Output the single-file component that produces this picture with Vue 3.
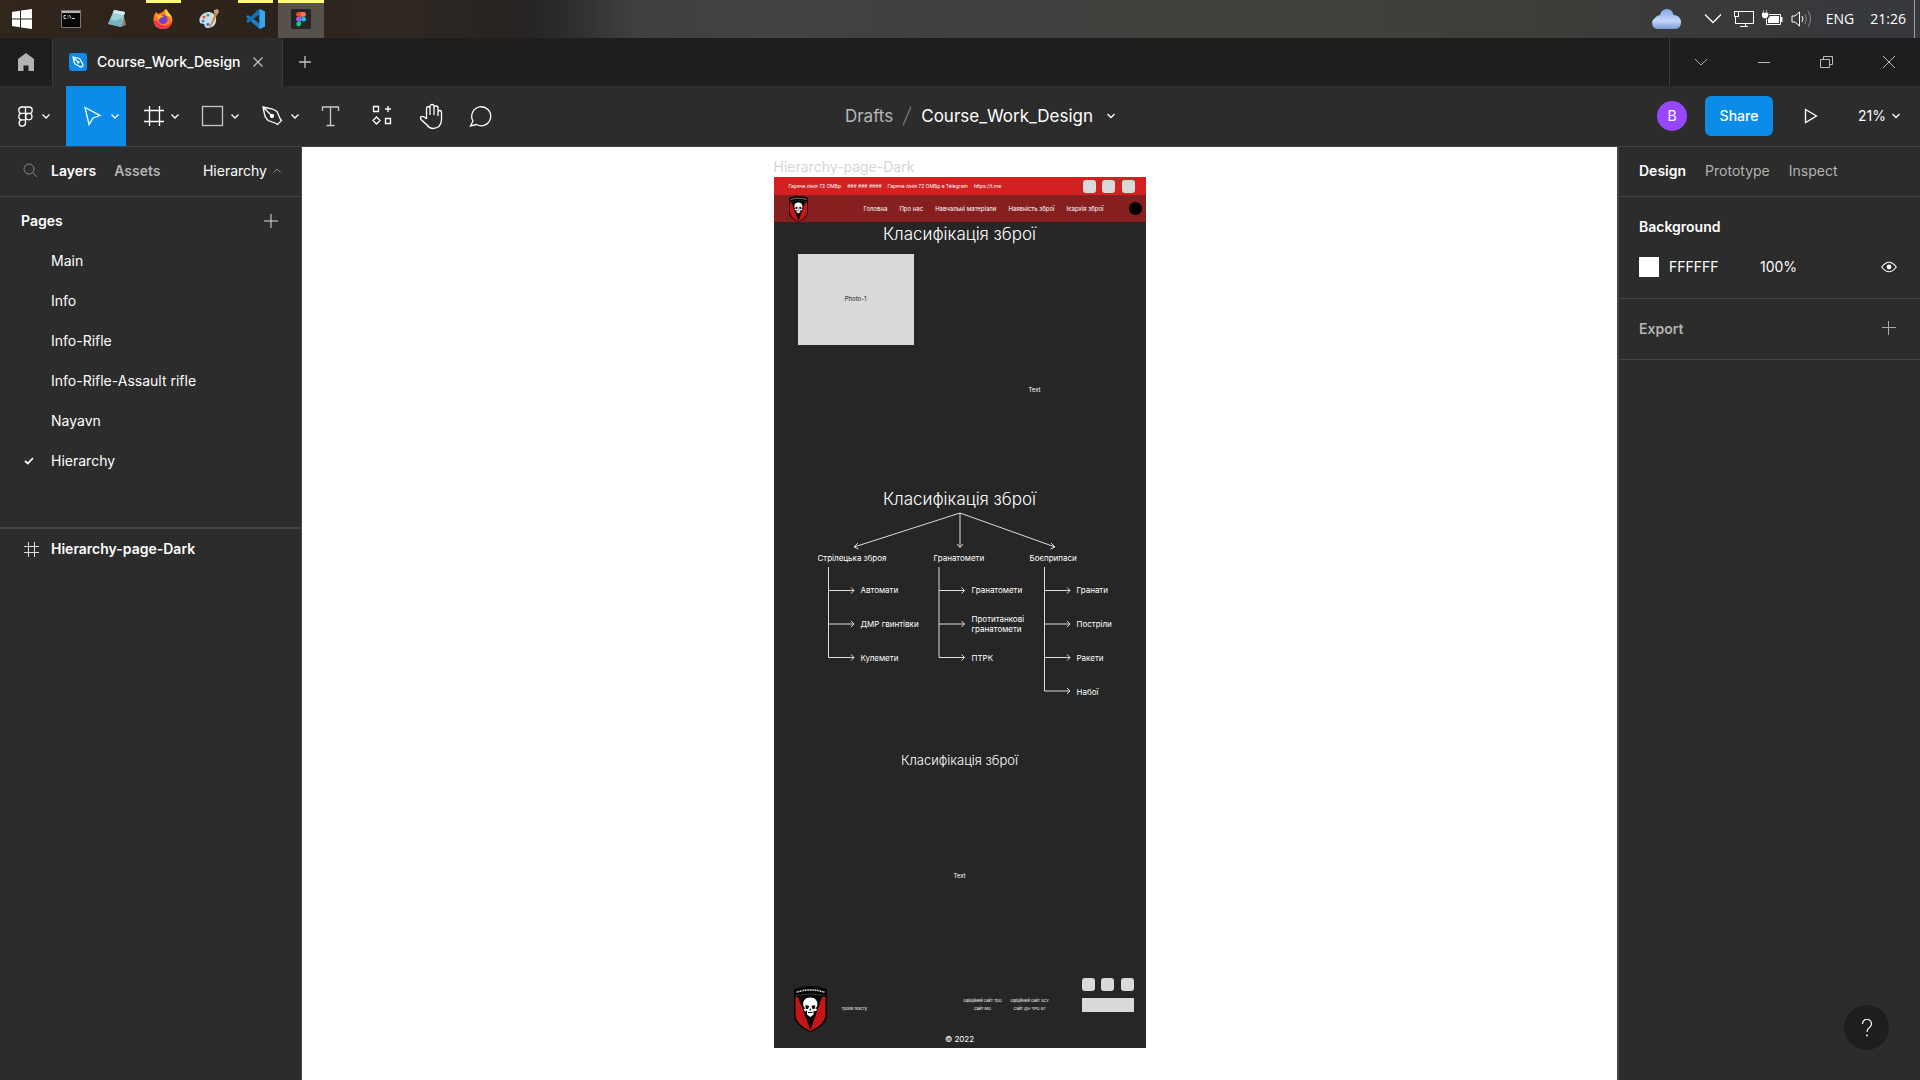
<script setup>
import { ref } from 'vue'

const pages = ['Main', 'Info', 'Info-Rifle', 'Info-Rifle-Assault rifle', 'Nayavn', 'Hierarchy']
const current = ref('Hierarchy')
const fill = ref('FFFFFF')
const opacity = ref('100%')

const menu = ['Головна', 'Про нас', 'Навчальні матеріали', 'Наявність зброї', 'Ієархія зброї']
const branches = [
  { title: 'Стрілецька зброя', items: ['Автомати', 'ДМР гвинтівки', 'Кулемети'] },
  { title: 'Гранатомети', items: ['Гранатомети', 'Протитанкові гранатомети', 'ПТРК'] },
  { title: 'Боєприпаси', items: ['Гранати', 'Постріли', 'Ракети', 'Набої'] }
]
const siteLinks = [
  ['Офіційний сайт ТрО', 'Сайт МО'],
  ['Офіційний сайт ЗСУ', 'Сайт ДН ТРО 07']
]
</script>

<template>
  <div class="desktop">
    <svg class="defs" aria-hidden="true">
      <symbol id="crest" viewBox="0 0 33 46">
        <path d="M0 3Q16.500-3 33 3V30Q32 40 16.500 46Q1 40 0 30Z" fill="#050505" />
        <path d="M1.500 11H31.500V30Q30 39 16.500 45Q3 39 1.500 30Z" fill="#c51617" />
        <path d="M1 9H32V11H28L16.500 44L4 11H1Z" fill="#050505" />
        <path d="M1.500 9.500Q16.500 6.500 31.500 9.500" fill="none" stroke="#555" stroke-width=".6" />
        <path d="M2.500 6.200Q16.500 1.600 30.500 6.200" fill="none" stroke="#ddd" stroke-width="1.500" stroke-dasharray="1.200 .5" />
        <path d="M16.300 11.500C11 11.500 9 15 9.200 18.500C9.300 20.500 10 21.500 11.500 22L9.500 23.500L11 25.500L13 24.500V28.500L16.300 31L19.600 28.500V24.500L21.600 25.500L23.200 23.500L21.200 22C22.800 21.500 23.400 20 23.400 18.500C23.500 15 21.500 11.500 16.300 11.500Z" fill="#fff" />
        <path d="M11.200 19.500Q13.500 18.500 15.200 20.500L14 23H12ZM21.400 19.500Q19 18.500 17.400 20.500L18.600 23H20.600ZM16.300 22L17.300 24.500H15.300ZM14 26H18.600V27H14Z" fill="#111" />
      </symbol>
    </svg>

    <header class="taskbar">
      <nav class="tasks" aria-label="Taskbar">
        <button class="task start" aria-label="Start">
          <svg width="22" height="22" viewBox="0 0 22 22"><path d="M1 4L9 2.800V10.400H1ZM10 2.600L21 1V10.400H10ZM1 11.400H9V19.200L1 18ZM10 11.400H21V21L10 19.400Z" fill="#fff" /></svg>
        </button>
        <button class="task" aria-label="Command Prompt">
          <svg width="20" height="18" viewBox="0 0 20 18"><rect x=".5" y=".5" width="19" height="17" fill="#080808" stroke="#777" /><rect x="1" y="1" width="18" height="2" fill="#b8b8b8" /><path d="M5 5.500H3V8.500H5M7 5.500V6.500M7 7.500V8.500M8.500 5L10 8.500M11 8.500H14" stroke="#ccc" fill="none" /></svg>
        </button>
        <button class="task" aria-label="Notepad">
          <svg width="20" height="20" viewBox="0 0 20 20"><path d="M16 3L19 16L14 18Z" fill="#8b8466" /><path d="M7 1L18 3L14 18L1 15Z" fill="#9fd0da" /><path d="M7 1L18 3L17 6L6 4Z" fill="#d8f0f2" /><path d="M3 10L9 12L15 9L14 18L1 15Z" fill="#5fa5b6" opacity=".7" /></svg>
        </button>
        <button class="task open" aria-label="Firefox">
          <svg width="20" height="20" viewBox="0 0 20 20"><path d="M3 3L5.500 5C8 3 10 4 11 1L14 0C14 3 19 5 19.500 11C19 17 15 20 10 20C4 20 0 16 .5 10C.5 7 1.500 5 3 3Z" fill="#ff7a1c" /><path d="M13 0C14 4 19 5 19 11C18 8 16 7 14 7C12 5 12 2 13 0Z" fill="#ffdc3d" /><path d="M1 11C1 17 6 20 10 20C15 20 18 17 19 13C15 18 7 18 4 12Z" fill="#f52f55" /><circle cx="10" cy="10.500" r="4.500" fill="#7a3bd0" /><path d="M3 6L8 6L11 8C8 8 7 9 6 11Z" fill="#ffb42b" /></svg>
        </button>
        <button class="task" aria-label="Paint">
          <svg width="20" height="20" viewBox="0 0 20 20"><path d="M9 3C3 4 0 8 .5 12C1 16 4 14 5 15C6 16 5 19 9 19C14 19 18 15 17 9C16 5 13 3 9 3Z" fill="#c9e2f2" /><circle cx="5" cy="8" r="1.600" fill="#e25a41" /><circle cx="9" cy="6" r="1.600" fill="#4b9f4a" /><circle cx="4" cy="12" r="1.500" fill="#4b83d8" /><circle cx="9" cy="15.500" r="1.700" fill="#3a7fd6" /><path d="M16 4L18 6L12 18L10 19Z" fill="#d9862f" /><path d="M15 1L19 0L20 3L18 6L15 4Z" fill="#c2a06b" /></svg>
        </button>
        <button class="task open" aria-label="Visual Studio Code">
          <svg width="20" height="20" viewBox="0 0 20 20"><path d="M14.500 0L20 2.500V17.500L14.500 20L1 8L2.800 6L14.500 14.500Z" fill="#1f7fc4" /><path d="M14.500 0V5.500L2.800 14L1 12L13 .8Z" fill="#1173b6" /><path d="M14.500 0L20 2.500V17.500L14.500 20Z" fill="#37a6ee" /></svg>
        </button>
        <button class="task open active" aria-label="Figma">
          <svg width="20" height="20" viewBox="0 0 20 20"><rect width="20" height="20" rx="1" fill="#252525" /><path d="M10 3H7.500A2.400 2.400 0 0 0 7.500 7.800H10Z" fill="#f24e1e" /><path d="M10 3H12.500A2.400 2.400 0 0 1 12.500 7.800H10Z" fill="#ff7262" /><path d="M10 7.800H7.500A2.400 2.400 0 0 0 7.500 12.600H10Z" fill="#a259ff" /><circle cx="12.500" cy="10.200" r="2.400" fill="#1abcfe" /><path d="M10 12.600H7.500A2.400 2.400 0 1 0 10 15Z" fill="#0acf83" /></svg>
        </button>
      </nav>
      <div class="tray">
        <svg width="30" height="20" viewBox="0 0 30 20"><defs><linearGradient id="sky" x2="0" y2="1"><stop stop-color="#7fa7ee" /><stop offset=".6" stop-color="#c4d8f8" /><stop offset="1" stop-color="#7898d6" /></linearGradient></defs><path d="M6 20A6 6 0 0 1 4 9C6 6 8 7 9 6C10 2 13 0 16 0C20 0 22 3 22.500 6C27 6 30 9 30 13C30 17 28 20 24 20Z" fill="url(#sky)" /></svg>
        <svg class="tray-chevron" width="18" height="12" viewBox="0 0 18 12"><path d="M1 1.500L9 9.500L17 1.500" fill="none" stroke="#fff" stroke-width="1.300" /></svg>
        <svg width="21" height="18" viewBox="0 0 21 18" fill="none" stroke="#fff" shape-rendering="crispEdges"><path d="M5 1.500H20.500V13.500H2.500V7M12 13V16M7 16.500H15M1 1.500H5V6H1Z" /></svg>
        <svg width="21" height="18" viewBox="0 0 21 18"><path d="M7 4.500H18.500V14.500H4.500V9" fill="none" stroke="#fff" /><path d="M8 6H17V13H6V9ZM19 7H20.500V12H19Z" fill="#fff" /><path d="M0 3H6V6L4.500 8H1.500L0 6ZM1.500 0V3M4.500 0V3" fill="#fff" stroke="#fff" stroke-width=".5" /></svg>
        <svg width="21" height="18" viewBox="0 0 21 18" fill="none" stroke="#fff"><path d="M1 6H4L8.500 2V16L4 12H1Z" /><path d="M11 6Q13 9 11 12" /><path d="M14 4Q17 9 14 14M17 1Q22 9 17 17" opacity=".4" /></svg>
        <span class="lang">ENG</span>
        <time>21:26</time>
      </div>
    </header>

    <div class="tabbar">
      <button class="home" aria-label="Home"><svg width="16" height="18" viewBox="0 0 16 18"><path d="M8 0L16 6V18H10.500V12.500H5.500V18H0V6Z" fill="#b3b3b3" /></svg></button>
      <div class="file-tab">
        <svg width="18" height="18" viewBox="0 0 18 18"><rect width="18" height="18" rx="3" fill="#0c8ce9" /><path d="M4 4L10.500 5.500L13.500 10.500L14 12.500L12.500 14L10.500 13.500L5.500 10.500ZM4 4L9 9" fill="none" stroke="#fff" stroke-width="1.200" /><circle cx="9.300" cy="9.300" r="1.200" fill="#fff" /></svg>
        <span>Course_Work_Design</span>
        <button aria-label="Close tab"><svg width="10" height="10" viewBox="0 0 10 10"><path d="M.5 .5L9.500 9.500M9.500 .5L.5 9.500" stroke="#bbb" stroke-width="1.300" /></svg></button>
      </div>
      <button class="new-tab" aria-label="New tab"><svg width="12" height="12" viewBox="0 0 12 12"><path d="M6 0V12M0 6H12" stroke="#c4c4c4" stroke-width="1.300" /></svg></button>
      <div class="window-controls">
        <button aria-label="More tabs"><svg width="14" height="14" viewBox="0 0 14 14"><path d="M1 4L7 10L13 4" fill="none" stroke="#aaa" /></svg></button>
        <button aria-label="Minimize"><svg width="14" height="14" viewBox="0 0 14 14"><path d="M1 7.500H13" stroke="#bbb" /></svg></button>
        <button aria-label="Restore"><svg width="14" height="14" viewBox="0 0 14 14"><path d="M1.500 4.500H10.500V12.500H1.500ZM4.500 4V1.500H13.500V9.500H11" fill="none" stroke="#bbb" /></svg></button>
        <button aria-label="Close"><svg width="14" height="14" viewBox="0 0 14 14"><path d="M1 1L13 13M13 1L1 13" stroke="#bbb" /></svg></button>
      </div>
    </div>

    <div class="toolbar">
      <div class="tools">
        <button aria-label="Main menu"><svg width="66" height="60" viewBox="0 0 66 60"><path d="M25.500 21H22A3.200 3.200 0 0 0 22 27.400H25.500ZM25.500 21H29A3.200 3.200 0 0 1 29 27.400H25.500ZM25.500 27.400H22A3.200 3.200 0 0 0 22 33.800H25.500ZM22 33.800A3.200 3.200 0 1 0 25.500 37V33.800Z" /><circle cx="28.800" cy="30.600" r="3.200" /><path d="M42.500 28.500L46 32L49.500 28.500" /></svg></button>
        <button class="on" aria-label="Move"><svg width="60" height="60" viewBox="0 0 60 60"><path d="M19 21.500L34 29.500L27 32L23 38.500Z" /><path d="M45.500 28.500L49 32L52.500 28.500" /></svg></button>
        <button aria-label="Frame"><svg width="60" height="60" viewBox="0 0 60 60"><path d="M23.500 20V40M33.500 20V40M18 24.500H38M18 35.500H38" /><path d="M45.500 28.500L49 32L52.500 28.500" /></svg></button>
        <button aria-label="Rectangle"><svg width="60" height="60" viewBox="0 0 60 60"><rect x="16.500" y="20.500" width="20" height="19" stroke="#c8c8c8" /><path d="M45.500 28.500L49 32L52.500 28.500" /></svg></button>
        <button aria-label="Pen"><svg width="60" height="60" viewBox="0 0 60 60"><path d="M17 21L26.500 23L31 25.500L34 32.500L35.500 34.500L31.500 38.500L29 37L22 34.500L19 30.500ZM17 21L25 29" /><circle cx="26" cy="30" r="1.500" fill="#fff" /><path d="M45.500 28.500L49 32L52.500 28.500" /></svg></button>
        <button aria-label="Text"><svg width="50" height="60" viewBox="0 0 50 60"><path d="M16.500 25V21H32.500V25M24.500 21V39.500M20.500 39.500H28.500" stroke="#c8c8c8" /></svg></button>
        <button aria-label="Resources"><svg width="50" height="60" viewBox="0 0 50 60"><path d="M17.500 20.500H22.500V25.500H17.500ZM29.500 32.500H34.500V37.500H29.500ZM32 20V26M29 23H35M20.500 31L24 34.500L20.500 38L17 34.500Z" /></svg></button>
        <button aria-label="Hand"><svg width="50" height="60" viewBox="0 0 50 60"><path d="M20.500 33V22.500A1.700 1.700 0 0 1 24 22.500V29M24 22.500V20.500A1.700 1.700 0 0 1 28 20.500V29M28 21.500A1.700 1.700 0 0 1 32 22.500V30M32 26A1.700 1.700 0 0 1 35.500 26.500V34Q35 42 27 42.500Q23.500 42.500 21 39L15 33.500Q13.500 31 16 30.500Q18 30 20.500 33" /></svg></button>
        <button aria-label="Comment"><svg width="50" height="60" viewBox="0 0 50 60"><path d="M14.500 40L17 35A9.500 9.500 0 1 1 20.500 38.500Z" /></svg></button>
      </div>
      <div class="crumbs">
        <a href="#drafts">Drafts</a>
        <svg class="slash" width="10" height="20" viewBox="0 0 10 20"><path d="M1 19.500L9 .5" /></svg>
        <button>Course_Work_Design<svg width="8" height="6" viewBox="0 0 8 6"><path d="M.5 1L4 4.500L7.500 1" /></svg></button>
      </div>
      <div class="account">
        <span class="avatar">B</span>
        <button class="share">Share</button>
        <button class="play" aria-label="Present"><svg width="14" height="16" viewBox="0 0 14 16"><path d="M1.500 1.500L12.500 8L1.500 14.500Z" /></svg></button>
        <button class="zoom">21%<svg width="8" height="6" viewBox="0 0 8 6"><path d="M.5 1L4 4.500L7.500 1" /></svg></button>
      </div>
    </div>

    <div class="workspace">
      <aside class="panel left">
        <div class="panel-tabs">
          <svg width="15" height="15" viewBox="0 0 15 15" fill="none" stroke="#888"><circle cx="6" cy="6" r="5" /><path d="M9.800 9.800L14 14" /></svg>
          <button class="strong">Layers</button>
          <button class="strong dim">Assets</button>
          <button class="page-pick">Hierarchy<svg width="8" height="6" viewBox="0 0 8 6"><path d="M.5 4.500L4 1L7.500 4.500" fill="none" stroke="#888" /></svg></button>
        </div>
        <div class="pages-head">
          <h2>Pages</h2>
          <button aria-label="Add page"><svg width="14" height="14" viewBox="0 0 14 14"><path d="M7 0V14M0 7H14" stroke="#ddd" /></svg></button>
        </div>
        <ul class="pages">
          <li v-for="p in pages" :key="p">
            <button @click="current = p">
              <span class="mark"><svg v-if="p === current" width="10" height="8" viewBox="0 0 10 8"><path d="M1 4L3.800 6.500L9 1" fill="none" stroke="#fff" stroke-width="1.800" /></svg></span>{{ p }}
            </button>
          </li>
        </ul>
        <button class="layer">
          <span class="mark"><svg width="15" height="15" viewBox="0 0 15 15"><path d="M4.500 0V15M10.500 0V15M0 4.500H15M0 10.500H15" stroke="#ddd" /></svg></span>Hierarchy-page-Dark
        </button>
      </aside>

      <main class="canvas">
        <div class="frame-name">Hierarchy-page-Dark</div>
        <article class="artboard">
          <div class="hotline">
            <span>Гаряча лінія 72 ОМБр</span><span>### ### ####</span><span>Гаряча лінія 72 ОМБр в Telegram</span><span>https://t.me</span>
            <div class="squares"><i></i><i></i><i></i></div>
          </div>
          <nav class="site-nav">
            <svg width="19" height="26"><use href="#crest" /></svg>
            <a v-for="m in menu" :key="m" href="#menu">{{ m }}</a>
            <i class="dot"></i>
          </nav>
          <h1>Класифікація зброї</h1>
          <section class="intro">
            <div class="photo">Photo-1</div>
            <p>Text</p>
          </section>
          <h1>Класифікація зброї</h1>
          <section class="tree">
            <svg class="links" width="371" height="190" viewBox="0 0 371 190">
              <path d="M186 4L80 38M84 34L80 38L84.500 40M186 4V38M183 35L186 38.500L189 35M186 4L281 38M277 34L281 38L276.500 40" />
              <path d="M54.500 58V148.500H80M54.500 81.500H80M54.500 115H80M77 78.500L80 81.500L77 84.500M77 112L80 115L77 118M77 145.500L80 148.500L77 151.500" />
              <path d="M165 58V148.500H190.500M165 81.500H190.500M165 115H190.500M187.500 78.500L190.500 81.500L187.500 84.500M187.500 112L190.500 115L187.500 118M187.500 145.500L190.500 148.500L187.500 151.500" />
              <path d="M270.500 58V182H296M270.500 81.500H296M270.500 115H296M270.500 148.500H296M293 78.500L296 81.500L293 84.500M293 112L296 115L293 118M293 145.500L296 148.500L293 151.500M293 179L296 182L293 185" />
            </svg>
            <div v-for="b in branches" :key="b.title" class="branch">
              <h3>{{ b.title }}</h3>
              <ul><li v-for="i in b.items" :key="i">{{ i }}</li></ul>
            </div>
          </section>
          <h2>Класифікація зброї</h2>
          <p class="note">Text</p>
          <footer class="site-footer">
            <svg width="33" height="46"><use href="#crest" /></svg>
            <span class="blurb">Трохи тексту</span>
            <div v-for="(col, n) in siteLinks" :key="n" class="site-links">
              <a v-for="l in col" :key="l" href="#site">{{ l }}</a>
            </div>
            <div class="contact">
              <div class="squares"><i></i><i></i><i></i></div>
              <div class="bar"></div>
            </div>
          </footer>
          <p class="copyright">© 2022</p>
        </article>
      </main>

      <aside class="panel right">
        <div class="panel-tabs">
          <button class="strong">Design</button>
          <button class="dim">Prototype</button>
          <button class="dim">Inspect</button>
        </div>
        <section class="background">
          <h2>Background</h2>
          <div class="fill-row">
            <span class="swatch"></span>
            <input v-model="fill" class="hex" aria-label="Background colour">
            <input v-model="opacity" class="opacity" aria-label="Background opacity">
            <button aria-label="Toggle visibility"><svg width="16" height="12" viewBox="0 0 16 12"><path d="M.7 6Q8-3.500 15.300 6Q8 15.500 .7 6Z" fill="none" stroke="#fff" stroke-width="1.200" /><circle cx="8" cy="6" r="2.400" fill="#fff" /></svg></button>
          </div>
        </section>
        <section class="export">
          <h2>Export</h2>
          <button aria-label="Add export"><svg width="16" height="14" viewBox="0 0 16 14"><path d="M7.500 0V14M1 6.500H15" stroke="#aaa" /></svg></button>
        </section>
        <button class="help" aria-label="Help"><svg width="12" height="18" viewBox="0 0 12 18"><path d="M1.500 5A4.500 4.500 0 1 1 8.500 8.500Q6 10 6 13" fill="none" stroke="#fff" stroke-width="1.200" /><circle cx="6" cy="16.500" r=".9" fill="#fff" /></svg></button>
      </aside>
    </div>
  </div>
</template>

<style>
body { background: #2c2c2c; }
</style>

<style scoped>
* { box-sizing: border-box; }
.desktop {
  display: flex;
  flex-direction: column;
  min-height: 100vh;
  font-family: Inter, "Liberation Sans", sans-serif;
  font-size: 14px;
  line-height: 20px;
  color: #fff;
  background: #2c2c2c;
}
.defs { position: absolute; width: 0; height: 0; }
svg { display: block; flex: none; }
button, input {
  margin: 0;
  padding: 0;
  border: 0;
  background: none;
  color: inherit;
  font: inherit;
}
button { display: flex; align-items: center; }
h1, h2, h3, p, ul { margin: 0; padding: 0; list-style: none; }
a { color: inherit; text-decoration: none; }

.taskbar {
  display: flex;
  justify-content: space-between;
  height: 38px;
  background: linear-gradient(90deg, #31261c 0%, #2b221b 15%, #302822 20%, #262322 27%, #2a2a29 29%, #40413f 33%, #434442 40%, #40413f 50%, #403f3b 75%, #3a3a39 88%, #36383d 100%);
}
.tasks { display: flex; }
.task { position: relative; justify-content: center; width: 46px; }
.start { width: 48px; padding-right: 4px; }
.open::before {
  content: "";
  position: absolute;
  top: 0;
  left: 6px;
  width: 35px;
  height: 3px;
  background: #fffa6e;
}
.active { background: #57514b; }
.active::before { left: 0; width: 100%; }
.tray {
  display: flex;
  align-items: center;
  border-right: 1px solid #a0a0a0;
  margin-right: 5px;
  padding-right: 8px;
  font-family: "Open Sans", sans-serif;
}
.tray svg { margin-right: 8px; }
.tray .tray-chevron { margin: 0 11px 0 15px; }
.lang { margin: 0 16px 0 6px; }

.tabbar { display: flex; height: 48px; background: #1e1e1e; padding-left: 1px; }
.home { width: 51px; padding-right: 2px; justify-content: center; }
.file-tab {
  display: flex;
  align-items: center;
  width: 231px;
  padding: 0 19px 0 16px;
  border: solid #3c3c3c;
  border-width: 0 1px;
  background: #2c2c2c;
  font-weight: 500;
}
.file-tab span { margin: 0 auto 0 10px; }
.new-tab { width: 43px; justify-content: center; }
.window-controls { display: flex; width: 251px; margin-left: auto; border-left: 1px solid #3c3c3c; }
.window-controls button { flex: 1; justify-content: center; }

.toolbar {
  display: grid;
  grid-template-columns: 1fr auto 1fr;
  height: 61px;
  border-bottom: 1px solid #444;
}
.tools { display: flex; }
.tools .on { background: #0c8ce9; }
.toolbar svg { fill: none; stroke: #fff; stroke-width: 1.3; }
.crumbs { display: flex; align-items: center; padding-left: 40px; font-size: 17px; }
.crumbs a { color: #b8b8b8; }
.crumbs .slash { margin: 0 9px; stroke: #777; }
.crumbs button svg { margin-left: 14px; }
.account { display: flex; align-items: center; justify-content: flex-end; padding-right: 20px; }
.avatar { width: 30px; height: 30px; border-radius: 50%; background: #9747ff; text-align: center; line-height: 30px; }
.share {
  justify-content: center;
  width: 68px;
  height: 40px;
  margin: 0 31px 0 18px;
  border-radius: 6px;
  background: #0c8ce9;
  font-weight: 500;
}
.play { margin-right: 40px; }
.zoom svg { margin-left: 6px; }

.workspace { display: flex; flex: 1; }
.panel { flex: none; background: #2c2c2c; }
.panel h2 { font-size: 14px; font-weight: 600; }
.left { width: 302px; border-right: 1px solid #444; }
.right { position: relative; width: 303px; border-left: 2px solid #444; }
.panel-tabs { display: flex; align-items: center; height: 50px; border-bottom: 1px solid #444; }
.strong { font-weight: 600; }
.dim { color: #b3b3b3; }
.left .panel-tabs { padding: 0 20px 2px 23px; }
.left .panel-tabs .strong { margin-left: 13px; }
.left .panel-tabs .dim { margin-left: 18px; }
.page-pick { margin-left: auto; }
.page-pick svg { margin-left: 6px; }
.pages-head { display: flex; align-items: center; justify-content: space-between; height: 44px; padding: 4px 23px 0 21px; }
.pages { height: 288px; border-bottom: 2px solid #444; }
.pages button, .layer { width: 100%; height: 40px; padding-left: 24px; text-align: left; }
.mark { width: 27px; }
.layer { font-weight: 600; }

.right .panel-tabs { gap: 19px; padding: 0 0 2px 20px; }
.right section { border-bottom: 1px solid #444; padding: 20px 23px 0 20px; }
.background { height: 102px; }
.fill-row { display: flex; align-items: center; margin-top: 20px; }
.swatch { width: 20px; height: 20px; background: #fff; }
.hex { width: 101px; padding-left: 10px; }
.opacity { width: 60px; }
.fill-row button { margin-left: auto; }
.export { display: flex; justify-content: space-between; align-items: flex-start; height: 61px; color: #b3b3b3; }
.export button { margin-top: 2px; }
.help {
  position: absolute;
  right: 31px;
  bottom: 30px;
  justify-content: center;
  width: 45px;
  height: 45px;
  border-radius: 50%;
  background: #1e1e1e;
}

.canvas { display: flex; flex: 1; flex-direction: column; align-items: center; padding-top: 10px; background: #fff; }
.frame-name { width: 372px; color: #d6d6d6; }
.artboard { width: 372px; background: #262626; font-size: 6px; line-height: 12px; }
.artboard h1, .artboard h2 { font-weight: 300; text-align: center; }
.artboard h1 { height: 22px; font-size: 17px; line-height: 24px; }
.artboard h2 { font-size: 13px; line-height: 20px; }
.squares { display: flex; justify-content: space-between; width: 52px; }
.squares i { width: 13px; height: 13px; border-radius: 3px; background: #d9d9d9; }
.hotline { display: flex; align-items: center; gap: 6px; height: 18px; padding: 0 11px 0 15px; background: #d32020; font-size: 5px; white-space: pre; }
.hotline .squares { margin-left: auto; }
.site-nav { display: flex; align-items: center; gap: 12px; height: 27px; padding: 0 4px 0 15px; background: #862020; white-space: nowrap; }
.site-nav svg { margin-right: auto; }
.dot { width: 13px; height: 13px; margin-left: 13px; border-radius: 50%; background: #000; }
.intro { display: flex; justify-content: space-between; height: 243px; padding: 10px 0 0 24px; text-align: center; }
.photo { width: 116px; height: 91px; background: #d9d9d9; color: #222; line-height: 90px; }
.intro p { width: 222px; padding-top: 130px; }
.tree { position: relative; display: grid; grid-template-columns: 116px 96px 1fr; height: 241px; padding: 42px 0 0 44px; font-size: 8px; }
.links { position: absolute; top: 0; left: 0; fill: none; stroke: #ddd; }
.branch h3 { font-size: 8px; font-weight: 400; line-height: 14px; white-space: nowrap; }
.branch ul { display: grid; grid-template-rows: repeat(4, 1fr); align-items: center; height: 136px; margin-top: 8px; padding-left: 43px; line-height: 10px; }
.branch:nth-of-type(2) ul { padding-left: 38px; }
.branch:nth-of-type(3) ul { padding-left: 47px; }
.note { margin-top: 100px; text-align: center; }
.site-footer { display: flex; align-items: flex-start; height: 54px; margin-top: 96px; padding: 0 12px 0 20px; font-size: 4px; line-height: 8px; }
.site-footer > svg { margin-top: 8px; }
.blurb { margin: 27px auto 0 15px; font-size: 4px; }
.site-links { width: 40px; margin: 19px 7px 0 0; text-align: center; white-space: nowrap; }
.site-links a { display: block; }
.contact { margin-left: 25px; }
.bar { width: 52px; height: 14px; margin-top: 7px; background: #d9d9d9; }
.copyright { height: 16px; padding-top: 1px; font-size: 8px; text-align: center; }
</style>
